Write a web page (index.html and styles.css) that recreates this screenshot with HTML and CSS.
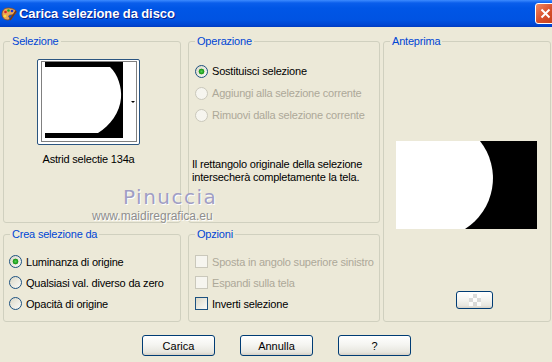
FILE: index.html
```html
<!doctype html>
<html lang="it">
  <head>
    <meta charset="UTF-8" />
    <meta name="viewport" content="width=device-width, initial-scale=1.0" />
    <title>Carica selezione da disco</title>
    <link rel="stylesheet" href="styles.css">
  </head>
  <body>
    <div class="window">
      <div class="titlebar">
        <svg class="app-icon" width="16" height="16" viewBox="0 0 16 16">
          <path d="M7 2C3 2 1 5 1 8c0 3 2 6 6 6 2 0 2-2 1-3-1-1 0-2 2-2 3 0 5-1 5-3 0-2-3-4-8-4z" fill="#e9a75a" stroke="#8a4a1a" stroke-width="0.8"/>
          <circle cx="4.5" cy="6" r="1.3" fill="#d22"/>
          <circle cx="7.5" cy="4.5" r="1.3" fill="#2a2"/>
          <circle cx="11" cy="5" r="1.3" fill="#23c"/>
          <circle cx="4" cy="10" r="1.3" fill="#fd3"/>
          <path d="M9 14l6-9" stroke="#7a3a12" stroke-width="1.6"/>
        </svg>
        <span class="title">Carica selezione da disco</span>
        <span class="close">
          <svg width="11" height="11" viewBox="0 0 11 11"><path d="M1.5 1.5l8 8M9.5 1.5l-8 8" stroke="#fff" stroke-width="2"/></svg>
        </span>
      </div>

      <div class="content">
        <div class="groups">
          <div class="column col-left">
            <fieldset class="group tall">
              <legend>Selezione</legend>
              <div class="thumb">
                <div class="thumb-box">
                  <svg width="101" height="84" viewBox="0 0 101 84">
                    <rect x="7" y="2" width="78" height="76" fill="#000"/>
                    <path d="M7 7H72C80 14 84 28 83 38C82 52 72 66 60 73H7Z" fill="#fff"/>
                    <rect x="3.5" y="1.5" width="95" height="80" fill="none" stroke="#000" stroke-dasharray="1 1"/>
                    <path d="M93 41h4l-2 2z" fill="#000"/>
                  </svg>
                </div>
                <div class="thumb-name">Astrid selectie 134a</div>
              </div>
            </fieldset>
            <fieldset class="group short crea">
              <legend>Crea selezione da</legend>
              <div class="options">
                <label class="opt"><input type="radio" name="src" checked> Luminanza di origine</label>
                <label class="opt"><input type="radio" name="src"> Qualsiasi val. diverso da zero</label>
                <label class="opt"><input type="radio" name="src"> Opacità di origine</label>
              </div>
            </fieldset>
          </div>

          <div class="column col-mid">
            <fieldset class="group tall">
              <legend>Operazione</legend>
              <div class="options op">
                <label class="opt"><input type="radio" name="op" checked> Sostituisci selezione</label>
                <label class="opt disabled"><input type="radio" name="op" disabled> Aggiungi alla selezione corrente</label>
                <label class="opt disabled"><input type="radio" name="op" disabled> Rimuovi dalla selezione corrente</label>
              </div>
              <p class="note">Il rettangolo originale della selezione<br>intersecherà completamente la tela.</p>
            </fieldset>
            <fieldset class="group short">
              <legend>Opzioni</legend>
              <div class="options">
                <label class="opt disabled"><input type="checkbox" disabled> Sposta in angolo superiore sinistro</label>
                <label class="opt disabled"><input type="checkbox" disabled> Espandi sulla tela</label>
                <label class="opt"><input type="checkbox"> Inverti selezione</label>
              </div>
            </fieldset>
          </div>

          <div class="column col-right">
            <fieldset class="group full">
              <legend>Anteprima</legend>
              <svg class="preview" width="141" height="88" viewBox="0 0 141 88">
                <rect width="141" height="88" fill="#000"/>
                <path d="M0 0H84A60 60 0 0 1 69 88H0Z" fill="#fff"/>
              </svg>
              <button class="btn small"><span class="checker"></span></button>
            </fieldset>
          </div>
        </div>

        <div class="buttons">
          <button class="btn">Carica</button>
          <button class="btn">Annulla</button>
          <button class="btn">?</button>
        </div>

        <div class="watermark">
          <div class="wm-name">Pinuccia</div>
          <div class="wm-site">www.maidiregrafica.eu</div>
        </div>
      </div>
    </div>
  </body>
</html>
```

FILE: styles.css
```css
body {
  margin: 0;
  font-family: "Liberation Sans", Arial, sans-serif;
  font-size: 11px;
  letter-spacing: -0.2px;
  color: #000;
  background: #ece9d8;
}

.window {
  position: relative;
  width: 552px;
  height: 362px;
  overflow: hidden;
  background: #ece9d8;
}

.titlebar {
  display: flex;
  align-items: center;
  height: 27px;
  padding-left: 1px;
  background: linear-gradient(#3d8bff 0, #0a5eeb 3px, #0056e6 8px, #0053e2 20px, #0046d2 25px, #003bc0 27px);
}

.app-icon {
  margin-top: 1px;
}

.title {
  flex: 1;
  margin-left: 2px;
  color: #fff;
  font-size: 13px;
  font-weight: bold;
  letter-spacing: -0.1px;
  text-shadow: 1px 1px 0 #0a1e8a;
}

.close {
  display: flex;
  align-items: center;
  justify-content: center;
  width: 19px;
  height: 19px;
  margin-right: -4px;
  border: 1px solid #fff;
  border-radius: 3px;
  background: linear-gradient(135deg, #f08a66, #d9502c 50%, #c2401c);
}

.content {
  padding: 8px 0 0 3px;
}

.groups {
  display: flex;
}

.column {
  display: flex;
  flex-direction: column;
  gap: 5px;
}

.col-left {
  width: 178px;
}

.col-mid {
  width: 192px;
  margin-left: 7px;
}

.col-right {
  width: 168px;
  margin-left: 3px;
}

.group {
  box-sizing: border-box;
  margin: 0;
  padding: 0;
  border: 1px solid #d0d0bf;
  border-radius: 3px;
  min-width: 0;
}

.group legend {
  margin-left: 6px;
  padding: 0 2px;
  line-height: 13px;
  color: #0046d5;
}

.tall {
  height: 188px;
}

.short {
  height: 94px;
}

.full {
  height: 287px;
}

.thumb {
  width: 103px;
  margin: 11px 0 0 33px;
}

.thumb-box {
  width: 101px;
  height: 84px;
  border: 1px solid #2b5580;
  border-radius: 2px;
  background: #fff;
}

.thumb-box svg {
  display: block;
}

.thumb-name {
  margin-top: 8px;
  text-align: center;
  white-space: nowrap;
  line-height: 13px;
}

.options {
  display: flex;
  flex-direction: column;
  padding: 10px 0 0 6px;
}

.options.op {
  padding-top: 12px;
}

.crea .options {
  padding-left: 5px;
}

.opt {
  display: flex;
  align-items: center;
  gap: 4px;
  height: 21px;
  white-space: nowrap;
}

.op .opt {
  height: 22px;
}

.opt.disabled {
  color: #aca899;
}

input[type="radio"],
input[type="checkbox"] {
  appearance: none;
  box-sizing: border-box;
  width: 13px;
  height: 13px;
  margin: 0;
  border: 1px solid #1c5180;
  background: linear-gradient(135deg, #dcd9c8, #fafaf7);
}

input[type="radio"] {
  border-radius: 50%;
}

input[type="radio"]:checked {
  background: radial-gradient(circle, #55d155 0, #21a121 2px, #1e961e 2.6px, transparent 3.2px),
    linear-gradient(135deg, #dcd9c8, #fafaf7);
}

input:disabled {
  border-color: #cac8bb;
  background: #f6f5ef;
}

.note {
  margin: 32px 0 0 3px;
  line-height: 13px;
}

.preview {
  display: block;
  margin: 93px 0 0 12px;
}

.btn {
  box-sizing: border-box;
  width: 73px;
  height: 21px;
  padding: 0;
  border: 1px solid #003c74;
  border-radius: 3px;
  background: linear-gradient(#ffffff, #f5f5f1 45%, #e7e6df 85%, #d6d0c5);
  font-family: inherit;
  font-size: 11px;
  color: #000;
}

.btn.small {
  display: flex;
  align-items: center;
  justify-content: center;
  width: 37px;
  height: 18px;
  margin: 62px 0 0 72px;
}

.checker {
  width: 12px;
  height: 12px;
  background: repeating-conic-gradient(#d4d4d4 0 25%, #fff 0 50%) 0 0 / 8px 8px;
  opacity: 0.8;
}

.buttons {
  display: flex;
  gap: 25px;
  margin-top: 13px;
  padding-left: 139px;
}

.watermark {
  position: absolute;
  left: 92px;
  top: 187px;
  pointer-events: none;
}

.wm-name {
  margin-left: 31px;
  font-family: "DejaVu Sans", sans-serif;
  font-size: 20px;
  line-height: 20px;
  letter-spacing: 1.5px;
  color: #a09ec4;
  text-shadow: 1px 1px 0 #fff;
}

.wm-site {
  margin-top: 3px;
  font-size: 12px;
  line-height: 12px;
  letter-spacing: 0;
  color: #8e8e8e;
  text-shadow: 1px 1px 0 #fff;
}
```
